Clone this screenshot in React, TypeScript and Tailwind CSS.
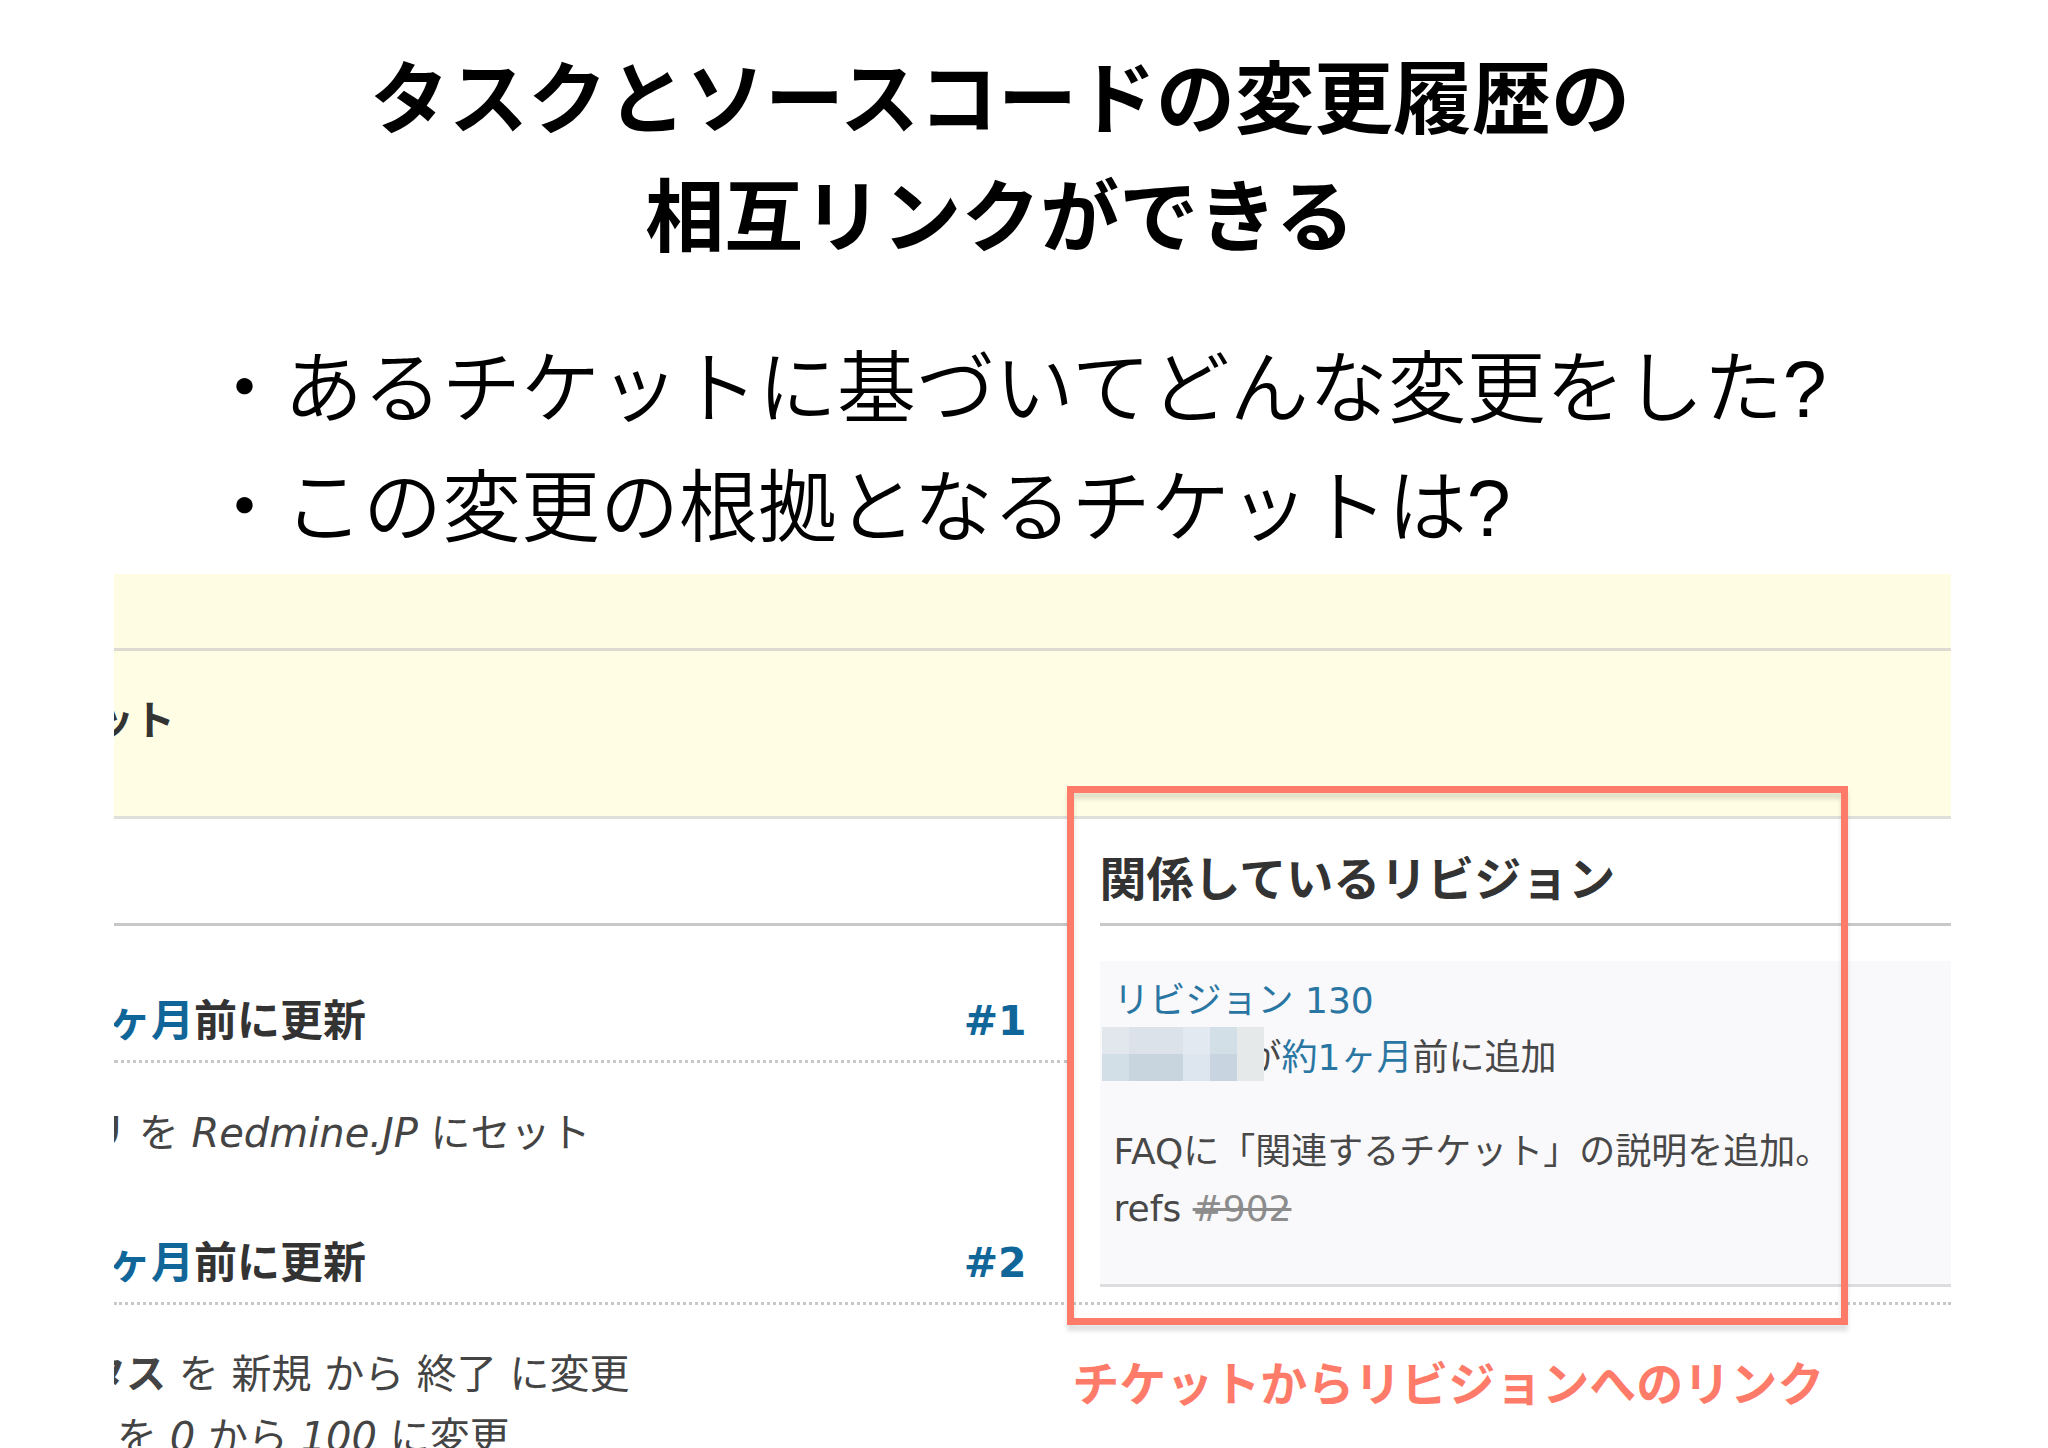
const mosaic = [
  "bg-[#e2e7ee]", "bg-[#dbe2e9]", "bg-[#dbe2e9]", "bg-[#e3e9f0]", "bg-[#d3dfe6]", "bg-[#e6e9e9]",
  "bg-[#d3dfe6]", "bg-[#c8d5df]", "bg-[#c8d5df]", "bg-[#dde5ee]", "bg-[#c8d5e0]", "bg-[#e6e9e9]",
];

const QuestionMark = () => <span className="font-['Liberation_Sans',sans-serif] leading-none">?</span>;

const JournalHeading = ({ id }: { id: number }) => (
  <h4 className="flex justify-between pr-[41px] text-[43px] leading-[64px] font-bold text-[#333]">
    <span className="-ml-1.5 whitespace-nowrap">
      <a href="#updated" className="text-[#116699]">ヶ月</a>前に更新
    </span>
    <a href={`#note-${id}`} className="text-[41px] text-[#116699]">#{id}</a>
  </h4>
);

const Revisions = () => (
  <section className="relative">
    <h3 className="border-b-3 border-[#c8c8c8] pt-[31px] pb-[13px] text-[47px] leading-[60px] font-bold whitespace-nowrap text-[#333]">
      関係しているリビジョン
    </h3>
    <div className="mt-[35px] border-b-3 border-[#dddddd] bg-[#f9f8fa] pt-[11px] pb-[47px] pl-3.5 text-[36px] leading-[57px] whitespace-nowrap text-[#484848]">
      <p>
        <a href="#revision" className="text-[#2a76a3]">リビジョン 130</a>
      </p>
      <p className="relative pl-[132px]">
        が<a href="#added" className="text-[#2a76a3]">約1ヶ月</a>前に追加
        <span className="absolute -top-0.5 -left-3 grid w-[162px] grid-cols-6">
          {mosaic.map((color, i) => (
            <span key={i} className={`h-[27px] ${color}`} />
          ))}
        </span>
      </p>
      <p className="mt-[37px]">FAQに「関連するチケット」の説明を追加。</p>
      <p>
        refs <a href="#902" className="text-[#8c8c8c] line-through">#902</a>
      </p>
    </div>
    {/* callout frame */}
    <div className="pointer-events-none absolute -top-[33px] right-[103px] -bottom-9 -left-[33px] border-7 border-[#ff7b69] drop-shadow-[0_6px_2px_rgba(0,0,0,0.12)]" />
  </section>
);

const TicketPanel = () => (
  <div className="mt-[13px] mr-[97px] ml-[114px] overflow-hidden font-['DejaVu_Sans','Noto_Sans_CJK_JP',sans-serif]">
    <div className="h-[77px] border-b-3 border-[#dddad2] bg-[#fffce4]" />
    <div className="border-b-3 border-[#dfdedb] bg-[#fffde3] pt-[38px] pb-[63px]">
      <p className="-ml-[21px] text-[41px] leading-[64px] font-bold text-[#333]">ット</p>
    </div>

    <div className="grid grid-cols-[28fr_25fr] gap-x-8 border-b-3 border-dotted border-[#c8c8c8] pb-[13px]">
      <section>
        <div className="h-[107px] border-b-3 border-[#c8c8c8]" />
        <div className="mt-[63px] border-b-3 border-dotted border-[#c8c8c8] pb-[7px]">
          <JournalHeading id={1} />
        </div>
        <p className="-ml-[28px] pt-[39px] text-[40px] leading-[63px] whitespace-nowrap text-[#444]">
          <strong>リ</strong> を <i>Redmine.JP</i> にセット
        </p>
        <div className="mt-[66px] -mb-1.5">
          <JournalHeading id={2} />
        </div>
      </section>
      <Revisions />
    </div>

    <div className="flex">
      <ul className="w-[52%] pt-[38px] text-[40px] leading-[63px] whitespace-nowrap text-[#444]">
        <li className="-ml-[28px]">
          <strong>タス</strong> を 新規 から 終了 に変更
        </li>
        <li className="pl-[3px]">
          を <i>0</i> から <i>100</i> に変更
        </li>
      </ul>
      <p className="pt-12 pl-[3px] text-[47px] leading-[64px] font-bold whitespace-nowrap text-[#ff7b69]">
        チケットからリビジョンへのリンク
      </p>
    </div>
  </div>
);

const App = () => {
  return (
    <main className="h-screen overflow-hidden bg-white font-['Noto_Sans_CJK_JP',sans-serif] text-black">
      <h1 className="pt-[35px] pr-12 text-center text-[79px] leading-[118px] font-bold">
        タスクとソースコードの変更履歴の
        <br />
        相互リンクができる
      </h1>
      <div className="mt-[52px] pl-[205px] text-[79px] leading-[119px] font-[350] whitespace-nowrap">
        <p>・あるチケットに基づいてどんな変更をした<QuestionMark /></p>
        <p>・この変更の根拠となるチケットは<QuestionMark /></p>
      </div>
      <TicketPanel />
    </main>
  );
};

export default App;
